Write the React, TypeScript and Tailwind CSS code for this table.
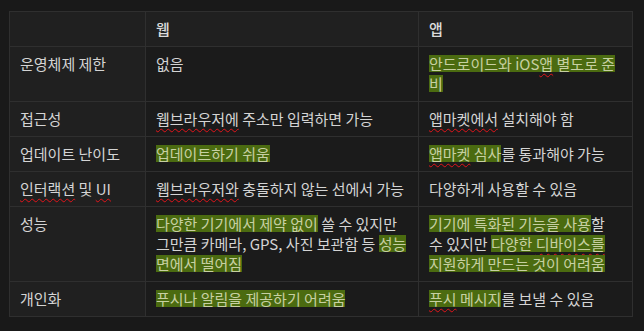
import React from 'react'

function Hl({ children }: { children: React.ReactNode }) {
  return (
    <span className="bg-[linear-gradient(transparent_2px,#4b6b10_2px,#4b6b10_calc(100%-2px),transparent_calc(100%-2px))] text-[#c7d0a2] [box-decoration-break:clone] [-webkit-box-decoration-break:clone]">
      {children}
    </span>
  )
}

function Sq({ children }: { children: React.ReactNode }) {
  return (
    <span className="underline decoration-wavy decoration-[#e0141a] decoration-1 underline-offset-[3px]">
      {children}
    </span>
  )
}

const rows: { label: React.ReactNode; web: React.ReactNode; app: React.ReactNode }[] = [
  {
    label: '운영체제 제한',
    web: '없음',
    app: (
      <Hl>
        안드로이드와 iOS<Sq>앱</Sq> 별도로 준<br />비
      </Hl>
    ),
  },
  {
    label: '접근성',
    web: (
      <>
        <Sq>웹브라우저에</Sq> 주소만 입력하면 가능
      </>
    ),
    app: (
      <>
        <Sq>앱마켓에서</Sq> 설치해야 함
      </>
    ),
  },
  {
    label: '업데이트 난이도',
    web: <Hl>업데이트하기 쉬움</Hl>,
    app: (
      <>
        <Hl>
          <Sq>앱마켓</Sq> 심사
        </Hl>
        를 통과해야 가능
      </>
    ),
  },
  {
    label: (
      <>
        <Sq>인터랙션</Sq> 및 <Sq>UI</Sq>
      </>
    ),
    web: (
      <>
        <Sq>웹브라우저와</Sq> 충돌하지 않는 선에서 가능
      </>
    ),
    app: '다양하게 사용할 수 있음',
  },
  {
    label: '성능',
    web: (
      <>
        <Hl>다양한 기기에서 제약 없이</Hl> 쓸 수 있지만
        <br />
        그만큼 카메라, GPS, 사진 보관함 등 <Hl>성능<br />면에서 떨어짐</Hl>
      </>
    ),
    app: (
      <>
        <Hl>기기에 특화된 기능을 사용</Hl>할
        <br />
        수 있지만 <Hl>다양한 <Sq>디바이스를</Sq><br />지원하게 만드는 것이 어려움</Hl>
      </>
    ),
  },
  {
    label: '개인화',
    web: <Hl>푸시나 알림을 제공하기 어려움</Hl>,
    app: (
      <>
        <Hl>
          <Sq>푸시</Sq> 메시지
        </Hl>
        를 보낼 수 있음
      </>
    ),
  },
]

export default function App() {
  const cell = 'border border-[#2f2f2f] px-[10px] py-[7px] align-top text-left font-normal'
  return (
    <div className="min-h-[331px] w-full bg-[#191919] pt-[11px] pl-[9px] font-['Noto_Sans_CJK_KR',sans-serif] text-[15px] leading-[20px] text-[#d4d4d4]">
      <table className="table-fixed border-collapse w-[623px]">
        <colgroup>
          <col className="w-[136px]" />
          <col className="w-[273px]" />
          <col className="w-[214px]" />
        </colgroup>
        <thead>
          <tr className="bg-[#202020]">
            <th className={cell}></th>
            <th className={`${cell} !font-medium text-[#dcdcdc]`}>웹</th>
            <th className={`${cell} !font-medium text-[#dcdcdc]`}>앱</th>
          </tr>
        </thead>
        <tbody>
          {rows.map((r, i) => (
            <tr key={i}>
              <td className={`${cell} bg-[#202020]`}>{r.label}</td>
              <td className={`${cell} bg-[#1b1b1b]`}>{r.web}</td>
              <td className={`${cell} bg-[#1b1b1b]`}>{r.app}</td>
            </tr>
          ))}
        </tbody>
      </table>
    </div>
  )
}
